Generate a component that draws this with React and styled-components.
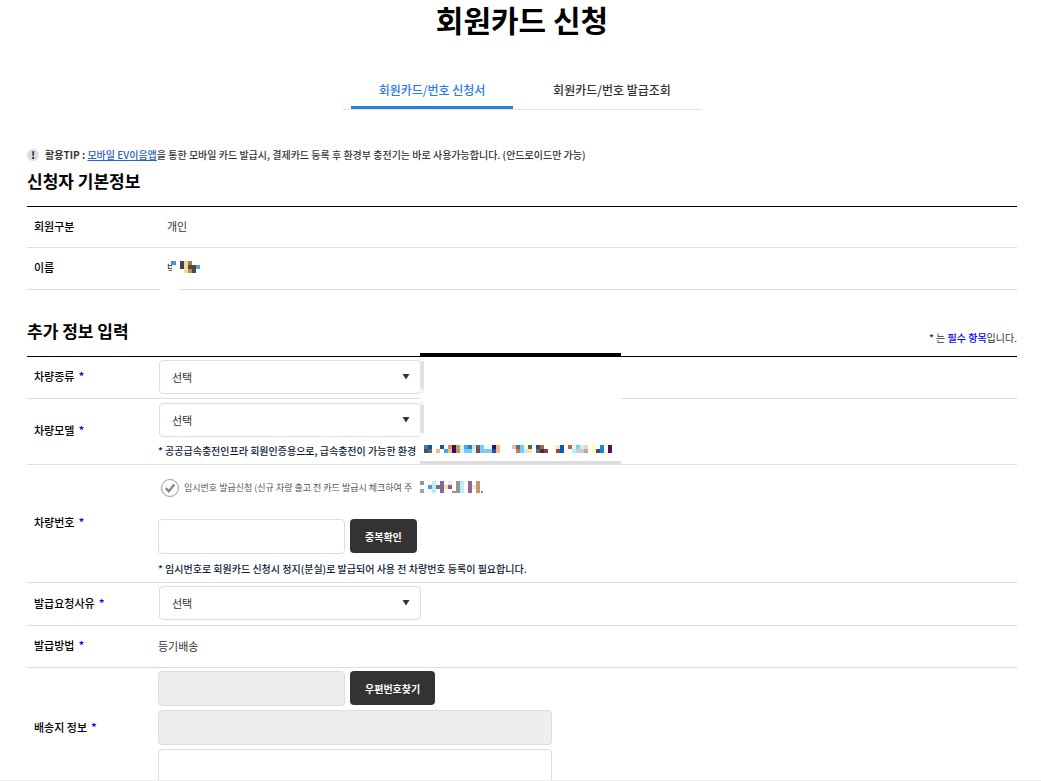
import React from "react";
import styled, { createGlobalStyle } from "styled-components";

// [x, y, width, height, color]
const nameBlocks = [
  [12, 0, 28, 14, "#fff"],
  [0, 27, 20, 3, "#fff"],
  [11, 0, 5, 4, "#4a90d9"],
  [20, 0, 4, 4, "#404454"],
  [20, 4, 4, 4, "#4a3458"],
  [24, 0, 4, 12, "#e0e2a4"],
  [28, 0, 4, 4, "#c07838"],
  [28, 4, 4, 4, "#4c4c48"],
  [28, 8, 4, 4, "#cc8848"],
  [32, 4, 4, 8, "#4c4c48"],
  [36, 4, 4, 4, "#5c9cdc"],
];

const vehicleBlocks = [
  [0, 4, 201, 104, "#fff"],
  [0, 0, 201, 4, "#000"],
  [0, 108, 201, 4, "#ddd"],
  [0, 8, 4, 28, "#e2e2e2"],
  [0, 36, 4, 4, "#f5f5f5"],
  [0, 48, 4, 4, "#f5f5f5"],
  [0, 52, 4, 28, "#e2e2e2"],

  [4, 92, 4, 4, "#5c708c"],
  [8, 92, 4, 4, "#0054b4"],
  [20, 92, 4, 4, "#005cbc"],
  [28, 92, 4, 4, "#e49050"],
  [32, 92, 4, 8, "#28106c"],
  [36, 92, 4, 4, "#e49050"],
  [40, 92, 4, 8, "#ccf8fa"],
  [44, 92, 4, 4, "#48a4f4"],
  [48, 92, 4, 4, "#1c84dc"],
  [52, 92, 4, 4, "#fcd0a8"],
  [56, 92, 4, 4, "#407088"],
  [60, 92, 4, 8, "#74ccfc"],
  [64, 92, 4, 4, "#fcf8dc"],
  [68, 92, 4, 4, "#e0fcf4"],
  [72, 92, 4, 4, "#28106c"],
  [76, 92, 4, 8, "#fcb47c"],
  [4, 96, 4, 4, "#405068"],
  [8, 96, 4, 4, "#686464"],
  [16, 96, 4, 4, "#fcb47c"],
  [24, 96, 4, 4, "#48a4f4"],
  [28, 96, 4, 4, "#fcb47c"],
  [36, 96, 4, 4, "#cc8c58"],
  [44, 96, 4, 4, "#74ccfc"],
  [48, 96, 4, 4, "#74ccfc"],
  [52, 96, 4, 4, "#c8fcfc"],
  [56, 96, 4, 4, "#904038"],
  [64, 96, 4, 4, "#74ccfc"],
  [68, 96, 4, 4, "#a4bce0"],
  [72, 96, 4, 4, "#0060b8"],

  [92, 92, 4, 4, "#e4c0a8"],
  [96, 92, 4, 4, "#607080"],
  [100, 92, 4, 8, "#74ccfc"],
  [104, 92, 4, 4, "#fcf4dc"],
  [108, 92, 4, 4, "#60645c"],
  [96, 96, 4, 4, "#c87c50"],
  [104, 96, 4, 4, "#b8f4fc"],
  [108, 96, 4, 4, "#fce0a4"],
  [116, 92, 4, 4, "#384868"],
  [120, 92, 4, 4, "#b86828"],
  [116, 96, 4, 4, "#646c7c"],
  [120, 96, 4, 4, "#482838"],
  [124, 96, 4, 4, "#904038"],

  [132, 92, 4, 8, "#fffce8"],
  [136, 92, 4, 4, "#fce4c0"],
  [136, 96, 4, 4, "#904c38"],
  [140, 92, 4, 8, "#005cb8"],
  [148, 92, 4, 4, "#b86830"],
  [152, 92, 4, 4, "#e0f8f4"],
  [152, 96, 4, 4, "#a4f4fc"],
  [156, 92, 4, 4, "#74ccfc"],
  [156, 96, 4, 4, "#e0c8c0"],
  [160, 92, 4, 4, "#d8ecf0"],
  [160, 96, 4, 4, "#b4ccec"],
  [164, 92, 4, 4, "#f0d4c0"],
  [164, 96, 4, 4, "#e0a070"],
  [172, 92, 4, 8, "#fcfcc0"],
  [176, 96, 4, 4, "#484878"],
  [180, 92, 4, 8, "#1c84dc"],
  [188, 92, 4, 8, "#581450"],

  [0, 128, 4, 4, "#949494"],
  [0, 136, 4, 4, "#94a4cc"],
  [8, 132, 4, 4, "#5c94d4"],
  [12, 128, 4, 12, "#b8ecfc"],
  [16, 132, 4, 4, "#906870"],
  [20, 128, 4, 12, "#7c689c"],
  [24, 132, 4, 4, "#fce0ac"],
  [28, 128, 4, 4, "#f4e8f0"],
  [28, 132, 4, 4, "#906080"],
  [32, 138, 4, 2, "#a08c78"],
  [36, 128, 4, 12, "#949494"],
  [40, 128, 4, 12, "#b8ecfc"],
  [48, 128, 4, 12, "#986488"],
  [52, 132, 4, 4, "#c4fcf4"],
  [56, 128, 4, 12, "#cc9464"],
  [61, 138, 2, 2, "#888"],
];

const Blocks = ({ as: Svg, data }) => (
  <Svg shapeRendering="crispEdges" aria-hidden="true">
    {data.map(([x, y, width, height, fill]) => (
      <rect key={`${x}-${y}`} x={x} y={y} width={width} height={height} fill={fill} />
    ))}
  </Svg>
);

const SelectBox = ({ id }) => (
  <SelectWrap>
    <Select id={id}>
      <option>선택</option>
    </Select>
    <Arrow viewBox="0 0 8 7" aria-hidden="true">
      <path d="M0.5 1h7L4 6.6z" fill="#333" />
    </Arrow>
  </SelectWrap>
);

const FieldLabel = ({ id, children }) => (
  <LabelCell scope="row">
    {id ? <label htmlFor={id}>{children}</label> : children}
    <Star>*</Star>
  </LabelCell>
);

const App = () => {
  return (
    <Page>
      <GlobalStyle />
      <Title>회원카드 신청</Title>
      <Tabs>
        <Tab href="#apply" $active>
          회원카드/번호 신청서
        </Tab>
        <Tab href="#history">회원카드/번호 발급조회</Tab>
      </Tabs>

      <Tip>
        <TipMark>!</TipMark>
        <p>
          <strong>활용TIP : </strong>
          <a href="#app">모바일 EV이음앱</a>을 통한 모바일 카드 발급시, 결제카드 등록 후 환경부 충전기는
          바로 사용가능합니다. (안드로이드만 가능)
        </p>
      </Tip>

      <SectionHead>
        <h2>신청자 기본정보</h2>
      </SectionHead>
      <Table>
        <tbody>
          <Row $height={41}>
            <LabelCell scope="row">회원구분</LabelCell>
            <Cell $indent>개인</Cell>
          </Row>
          <Row $height={42}>
            <LabelCell scope="row">이름</LabelCell>
            <Cell $indent>
              <Name>
                박
                <Blocks as={NameMosaic} data={nameBlocks} />
              </Name>
            </Cell>
          </Row>
        </tbody>
      </Table>

      <SectionHead $spaced>
        <h2>추가 정보 입력</h2>
        <Required>
          <b>*</b> 는 <b>필수 항목</b>입니다.
        </Required>
      </SectionHead>
      <TableWrap>
        <Table>
          <tbody>
            <Row $height={42}>
              <FieldLabel id="kind">차량종류</FieldLabel>
              <Cell>
                <SelectBox id="kind" />
              </Cell>
            </Row>
            <Row $height={66}>
              <FieldLabel id="model">차량모델</FieldLabel>
              <Cell>
                <Stack $gap={6}>
                  <SelectBox id="model" />
                  <Note>* 공공급속충전인프라 회원인증용으로, 급속충전이 가능한 환경</Note>
                </Stack>
              </Cell>
            </Row>
            <Row $height={118}>
              <FieldLabel id="number">차량번호</FieldLabel>
              <Cell $top={11}>
                <Agree>
                  <CheckWrap>
                    <Checkbox type="checkbox" />
                    <Check viewBox="0 0 18 18" aria-hidden="true">
                      <path d="M4.8 9.2l3 3.1 5.5-6.8" fill="none" stroke="#888" strokeWidth="2.4" />
                    </Check>
                  </CheckWrap>
                  임시번호 발급신청 (신규 차량 출고 전 카드 발급시 체크하여 주
                </Agree>
                <Stack $gap={7}>
                  <Line>
                    <Input id="number" $width={187} />
                    <Button type="button">중복확인</Button>
                  </Line>
                  <Note>
                    * 임시번호로 회원카드 신청시 정지(분실)로 발급되어 사용 전 차량번호 등록이 필요합니다.
                  </Note>
                </Stack>
              </Cell>
            </Row>
            <Row $height={43}>
              <FieldLabel id="reason">발급요청사유</FieldLabel>
              <Cell>
                <SelectBox id="reason" />
              </Cell>
            </Row>
            <Row $height={42}>
              <FieldLabel>발급방법</FieldLabel>
              <Cell>등기배송</Cell>
            </Row>
            <Row $height={122}>
              <FieldLabel id="zip">배송지 정보</FieldLabel>
              <Cell>
                <Stack $gap={4}>
                  <Line>
                    <Input id="zip" $width={187} disabled />
                    <Button type="button">우편번호찾기</Button>
                  </Line>
                  <Input $width={394} aria-label="주소" disabled />
                  <Input $width={394} aria-label="상세주소" />
                </Stack>
              </Cell>
            </Row>
          </tbody>
        </Table>
        <Blocks as={VehicleMosaic} data={vehicleBlocks} />
      </TableWrap>
    </Page>
  );
};

export default App;

const GlobalStyle = createGlobalStyle`
  * {
    box-sizing: border-box;
    margin: 0;
    padding: 0;
  }
  body {
    background: #fff;
    color: #333;
    font-family: "Noto Sans CJK KR", sans-serif;
    font-size: 11px;
    line-height: 16px;
  }
  input, select, button {
    font-family: inherit;
  }
`;

const Page = styled.main`
  height: 100vh;
  overflow: hidden;
  padding: 0 24px 0 27px;
  border-bottom: 1px solid #eee;
`;

const Title = styled.h1`
  font-size: 30px;
  line-height: 38px;
  text-align: center;
  color: #000;
`;

const Tabs = styled.nav`
  display: flex;
  gap: 18px;
  width: 360px;
  margin: 35px auto;
  padding: 0 9px;
  border-bottom: 1px solid #e5e5e5;
`;

const Tab = styled.a`
  flex: 1;
  border-bottom: 3px solid ${({ $active }) => ($active ? "#2a7de1" : "transparent")};
  color: ${({ $active }) => ($active ? "#2a7de1" : "#333")};
  font-size: 12px;
  font-weight: 500;
  line-height: 33px;
  text-align: center;
  text-decoration: none;
  white-space: nowrap;
`;

const Tip = styled.div`
  display: flex;
  align-items: center;
  gap: 6px;
  font-size: 10px;
  font-weight: 500;
  line-height: 20px;
  a {
    color: #2a62c4;
  }
`;

const TipMark = styled.span`
  width: 12px;
  height: 12px;
  border-radius: 50%;
  background: #ddd;
  color: #000;
  font-weight: 700;
  line-height: 12px;
  text-align: center;
`;

const SectionHead = styled.div`
  display: flex;
  justify-content: space-between;
  align-items: flex-start;
  height: 27px;
  margin: ${({ $spaced }) => ($spaced ? 29 : 4)}px 0 10px;
  h2 {
    color: #000;
    font-size: 17px;
    font-weight: 700;
    line-height: 24px;
  }
`;

const Required = styled.p`
  padding-top: 11px;
  font-size: 10px;
  b {
    color: #00f;
    font-weight: 500;
  }
`;

const TableWrap = styled.div`
  position: relative;
`;

const Table = styled.table`
  width: 100%;
  border-collapse: collapse;
  border-top: 1px solid #000;
`;

const Row = styled.tr`
  height: ${({ $height }) => $height}px;
  border-bottom: 1px solid #ddd;
`;

const LabelCell = styled.th`
  width: 131px;
  padding: 0 0 3px 7px;
  color: #000;
  font-weight: 500;
  text-align: left;
`;

const Cell = styled.td`
  padding-top: ${({ $top }) => $top || 0}px;
  padding-bottom: 2px;
  padding-left: ${({ $indent }) => ($indent ? 9 : 0)}px;
`;

const Star = styled.span`
  margin-left: 4px;
  color: #00f;
  font-size: 12px;
  line-height: 12px;
`;

const Name = styled.div`
  position: relative;
`;

const NameMosaic = styled.svg`
  position: absolute;
  top: 1px;
  left: -7px;
  width: 40px;
  height: 30px;
`;

const VehicleMosaic = styled.svg`
  position: absolute;
  top: -3px;
  left: 393px;
  width: 201px;
  height: 144px;
  pointer-events: none;
`;

const Stack = styled.div`
  display: flex;
  flex-direction: column;
  gap: ${({ $gap }) => $gap}px;
`;

const SelectWrap = styled.div`
  position: relative;
  width: 262px;
  margin-left: 1px;
`;

const Select = styled.select`
  display: block;
  width: 100%;
  height: 34px;
  padding-left: 12px;
  appearance: none;
  background: #fff;
  border: 1px solid #ddd;
  border-radius: 4px;
  color: #333;
  font-size: 11px;
`;

const Arrow = styled.svg`
  position: absolute;
  top: 13px;
  right: 11px;
  width: 8px;
  height: 7px;
  pointer-events: none;
`;

const Note = styled.p`
  color: #0b1a33;
  font-size: 10px;
  font-weight: 500;
`;

const Agree = styled.label`
  display: flex;
  align-items: center;
  gap: 5px;
  margin: 0 0 22px 3px;
  color: #555;
  font-size: 9px;
`;

const CheckWrap = styled.span`
  position: relative;
  width: 18px;
  height: 18px;
`;

const Checkbox = styled.input`
  display: block;
  width: 18px;
  height: 18px;
  appearance: none;
  border: 1px solid #999;
  border-radius: 50%;
`;

const Check = styled.svg`
  position: absolute;
  inset: 0;
`;

const Line = styled.div`
  display: flex;
  gap: 5px;
`;

const Input = styled.input`
  width: ${({ $width }) => $width}px;
  height: 35px;
  padding: 0 10px;
  background: #fff;
  border: 1px solid #ddd;
  border-radius: 4px;
  font-size: 11px;
  &:disabled {
    background: #eee;
  }
`;

const Button = styled.button`
  height: 34px;
  padding: 0 15px;
  background: #333;
  border: 0;
  border-radius: 4px;
  color: #fff;
  font-size: 10px;
  font-weight: 700;
`;
